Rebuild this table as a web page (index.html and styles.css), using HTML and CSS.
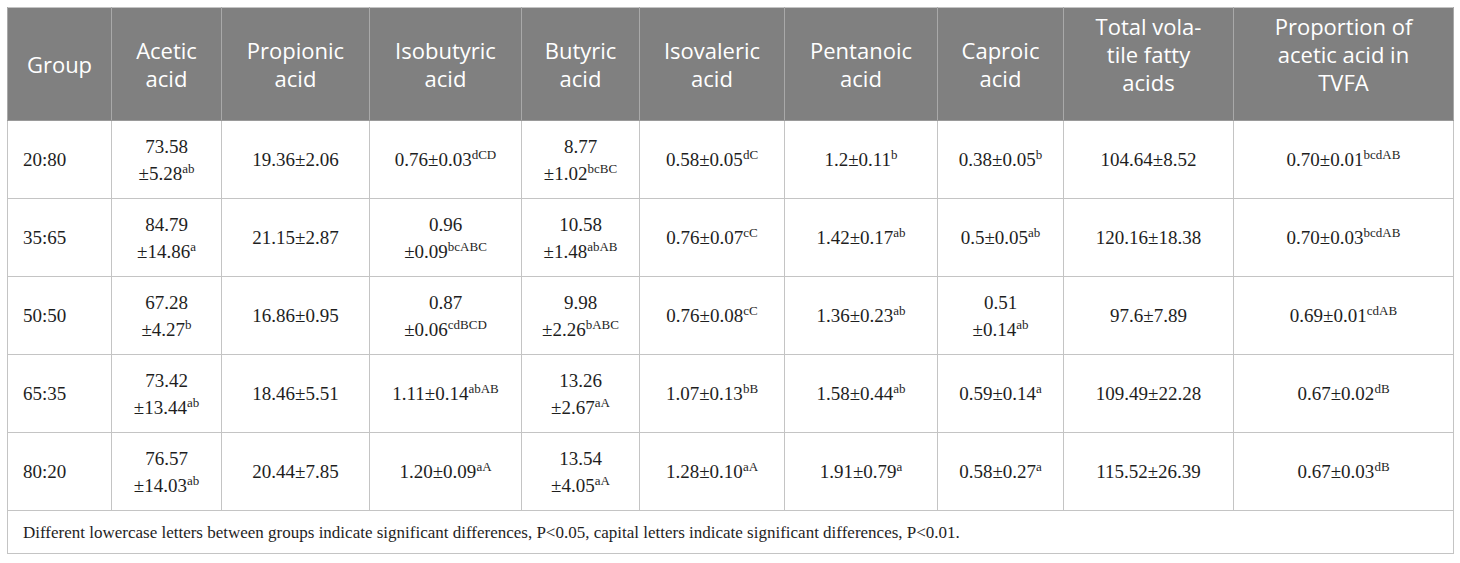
FILE: index.html
```html
<!DOCTYPE html>
<html lang="en">
<head>
<meta charset="utf-8">
<title>VFA table</title>
<link rel="stylesheet" href="styles.css">
</head>
<body>
<table class="vfa">
  <colgroup>
    <col class="c1"><col class="c2"><col class="c3"><col class="c4"><col class="c5">
    <col class="c6"><col class="c7"><col class="c8"><col class="c9"><col class="c10">
  </colgroup>
  <thead>
    <tr>
      <th>Group</th>
      <th>Acetic<br>acid</th>
      <th>Propionic<br>acid</th>
      <th>Isobutyric<br>acid</th>
      <th>Butyric<br>acid</th>
      <th>Isovaleric<br>acid</th>
      <th>Pentanoic<br>acid</th>
      <th>Caproic<br>acid</th>
      <th class="tall">Total vola-<br>tile fatty<br>acids</th>
      <th class="tall">Proportion of<br>acetic acid in<br>TVFA</th>
    </tr>
  </thead>
  <tbody>
    <tr>
      <td class="grp">20:80</td>
      <td>73.58<br>±5.28<sup>ab</sup></td>
      <td>19.36±2.06</td>
      <td>0.76±0.03<sup>dCD</sup></td>
      <td>8.77<br>±1.02<sup>bcBC</sup></td>
      <td>0.58±0.05<sup>dC</sup></td>
      <td>1.2±0.11<sup>b</sup></td>
      <td>0.38±0.05<sup>b</sup></td>
      <td>104.64±8.52</td>
      <td>0.70±0.01<sup>bcdAB</sup></td>
    </tr>
    <tr>
      <td class="grp">35:65</td>
      <td>84.79<br>±14.86<sup>a</sup></td>
      <td>21.15±2.87</td>
      <td>0.96<br>±0.09<sup>bcABC</sup></td>
      <td>10.58<br>±1.48<sup>abAB</sup></td>
      <td>0.76±0.07<sup>cC</sup></td>
      <td>1.42±0.17<sup>ab</sup></td>
      <td>0.5±0.05<sup>ab</sup></td>
      <td>120.16±18.38</td>
      <td>0.70±0.03<sup>bcdAB</sup></td>
    </tr>
    <tr>
      <td class="grp">50:50</td>
      <td>67.28<br>±4.27<sup>b</sup></td>
      <td>16.86±0.95</td>
      <td>0.87<br>±0.06<sup>cdBCD</sup></td>
      <td>9.98<br>±2.26<sup>bABC</sup></td>
      <td>0.76±0.08<sup>cC</sup></td>
      <td>1.36±0.23<sup>ab</sup></td>
      <td>0.51<br>±0.14<sup>ab</sup></td>
      <td>97.6±7.89</td>
      <td>0.69±0.01<sup>cdAB</sup></td>
    </tr>
    <tr>
      <td class="grp">65:35</td>
      <td>73.42<br>±13.44<sup>ab</sup></td>
      <td>18.46±5.51</td>
      <td>1.11±0.14<sup>abAB</sup></td>
      <td>13.26<br>±2.67<sup>aA</sup></td>
      <td>1.07±0.13<sup>bB</sup></td>
      <td>1.58±0.44<sup>ab</sup></td>
      <td>0.59±0.14<sup>a</sup></td>
      <td>109.49±22.28</td>
      <td>0.67±0.02<sup>dB</sup></td>
    </tr>
    <tr>
      <td class="grp">80:20</td>
      <td>76.57<br>±14.03<sup>ab</sup></td>
      <td>20.44±7.85</td>
      <td>1.20±0.09<sup>aA</sup></td>
      <td>13.54<br>±4.05<sup>aA</sup></td>
      <td>1.28±0.10<sup>aA</sup></td>
      <td>1.91±0.79<sup>a</sup></td>
      <td>0.58±0.27<sup>a</sup></td>
      <td>115.52±26.39</td>
      <td>0.67±0.03<sup>dB</sup></td>
    </tr>
  </tbody>
  <tfoot>
    <tr>
      <td class="note" colspan="10">Different lowercase letters between groups indicate significant differences, P&lt;0.05, capital letters indicate significant differences, P&lt;0.01.</td>
    </tr>
  </tfoot>
</table>
</body>
</html>
```

FILE: styles.css
```css
html, body {
  margin: 0;
  padding: 0;
  background: #ffffff;
}

body {
  padding: 7px 0 0 7px;
}

.vfa {
  border-collapse: collapse;
  table-layout: fixed;
  width: 1446px;
  border: 1px solid #c4c4c4;
}

.c1 { width: 104px; }
.c2 { width: 110px; }
.c3 { width: 148px; }
.c4 { width: 152px; }
.c5 { width: 118px; }
.c6 { width: 145px; }
.c7 { width: 153px; }
.c8 { width: 126px; }
.c9 { width: 170px; }
.c10 { width: 220px; }

.vfa th {
  background: #808080;
  color: #ffffff;
  font-family: "Open Sans", "DejaVu Sans", sans-serif;
  font-weight: 400;
  font-size: 22px;
  line-height: 28px;
  height: 113px;
  padding: 0 4px;
  text-align: center;
  vertical-align: middle;
  border-left: 1px solid #a9a9a9;
  border-right: 1px solid #a9a9a9;
  border-bottom: 1px solid #9a9a9a;
  box-sizing: border-box;
}

.vfa th.tall {
  padding-bottom: 20px;
}

.vfa td {
  font-family: "Liberation Serif", "Times New Roman", serif;
  font-size: 19px;
  line-height: 27px;
  color: #1e1e1e;
  text-align: center;
  vertical-align: middle;
  height: 78px;
  padding: 0 4px;
  border: 1px solid #c4c4c4;
  box-sizing: border-box;
}

.vfa td.grp {
  text-align: left;
  padding-left: 15px;
}

.vfa sup {
  font-size: 13px;
  line-height: 0;
  vertical-align: 7px;
}

.vfa td.note {
  height: 43px;
  text-align: left;
  padding-left: 15px;
  font-size: 17px;
}
```
